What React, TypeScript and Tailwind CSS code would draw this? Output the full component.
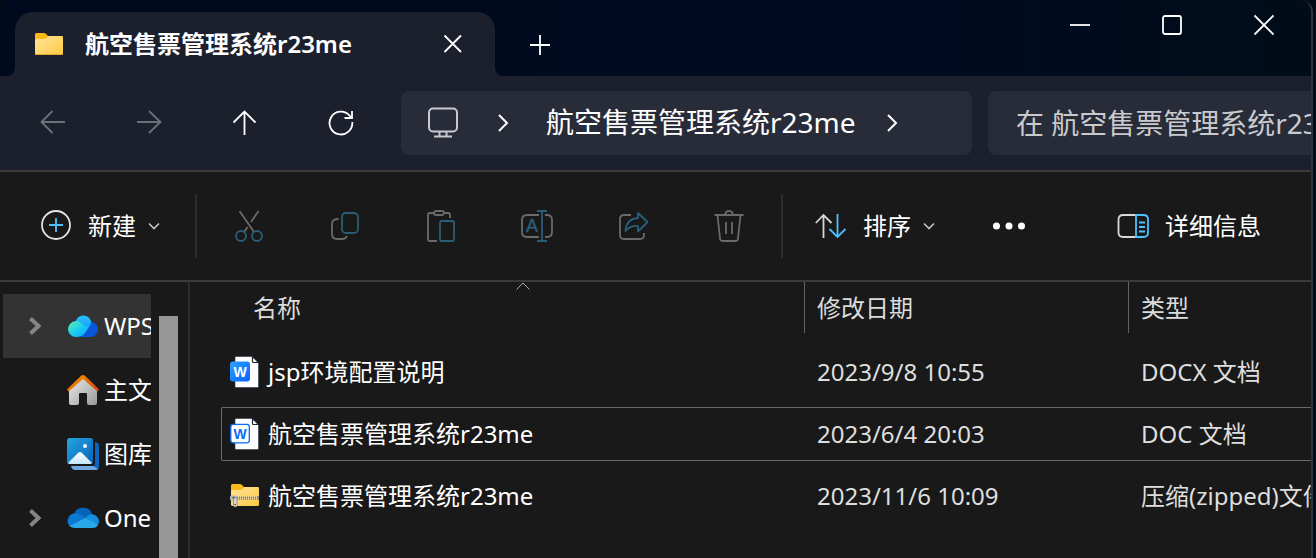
import React from "react";

const files = [
  { icon: "docx", name: "jsp环境配置说明", date: "2023/9/8 10:55", type: "DOCX 文档" },
  { icon: "doc", name: "航空售票管理系统r23me", date: "2023/6/4 20:03", type: "DOC 文档", focused: true },
  { icon: "zip", name: "航空售票管理系统r23me", date: "2023/11/6 10:09", type: "压缩(zipped)文件夹" },
];

const Icon = ({ size = 32, children }: { size?: number; children: React.ReactNode }) => (
  <svg
    width={size}
    height={size}
    viewBox={`0 0 ${size} ${size}`}
    fill="none"
    stroke="currentColor"
    strokeWidth="1.8"
    className="shrink-0"
    aria-hidden="true"
  >
    {children}
  </svg>
);

const FolderIcon = () => (
  <svg width="28" height="22" viewBox="0 0 28 22" className="shrink-0" aria-hidden="true">
    <defs>
      <linearGradient id="folder" x1="0" y1="0" x2="1" y2="1">
        <stop offset="0" stopColor="#ffe49c" />
        <stop offset="1" stopColor="#ffca3e" />
      </linearGradient>
    </defs>
    <path d="M0 1.5Q0 0 1.5 0H9q1 0 2 1l2 2h13.500Q28 3 28 4.500V12H0z" fill="#fbb917" />
    <path d="M0 7.500Q0 6 1.500 6H9.500q1 0 2-1l1-1q.7-1 2-1H26.500Q28 3 28 4.500V20.500Q28 22 26.500 22H1.500Q0 22 0 20.500z" fill="url(#folder)" />
    <path d="M0 20.500Q0 22 1.500 22H26.500Q28 22 28 20.500L27 21H1z" fill="#e9a92b" />
  </svg>
);

const ZipIcon = () => (
  <svg width="30" height="24" viewBox="0 0 30 24" className="shrink-0" aria-hidden="true">
    <path d="M1 1.500Q1 0 2.500 0H10q1 0 2 1l2 2h13.500Q29 3 29 4.500V12H1z" fill="#fbb917" />
    <path d="M1 7.500Q1 6 2.500 6H10.500q1 0 2-1l1-1q.7-1 2-1H27.500Q29 3 29 4.500V20.500Q29 22 27.500 22H2.500Q1 22 1 20.500z" fill="url(#folder)" />
    <path d="M6 12H29V16H6z" fill="#e8cf90" />
    <path d="M7 13.300H29M7 15H29" stroke="#6b5a2e" strokeWidth="1" strokeDasharray="1 1" />
    <path d="M27 12h2v4h-2z" fill="#8f8f8f" />
    <rect x="0" y="11.500" width="7.500" height="5" rx="1.500" fill="#b9b9b9" />
    <path d="M3.500 14h3.500v7.500q0 1.500-1.700 1.500t-1.800-1.500z" fill="#dcdcdc" stroke="#777" strokeWidth=".7" />
    <circle cx="5.200" cy="20.500" r=".8" fill="#444" />
    <circle cx="3.500" cy="13.500" r="1" fill="#555" />
  </svg>
);

const WordIcon = ({ outlined }: { outlined?: boolean }) => (
  <svg width="30" height="32" viewBox="0 0 30 32" className="shrink-0" aria-hidden="true">
    <defs>
      <linearGradient id="wps" x1="0" y1="0" x2="1" y2="1">
        <stop offset="0" stopColor="#2ba2ff" />
        <stop offset="1" stopColor="#0a62ff" />
      </linearGradient>
    </defs>
    <path d="M5 1.500Q5 .5 6 .5H22.500L28.500 6.500V30.500Q28.500 31.500 27.500 31.500H6Q5 31.500 5 30.500z" fill="#fdfeff" stroke="#2d3545" strokeWidth=".6" />
    <path d="M22.500 .5V5.500q0 1 1 1H28.500z" fill="#fff" stroke="#20252f" strokeWidth="1.200" />
    {outlined ? (
      <rect x=".8" y="6.300" width="18.500" height="18.500" rx="2.500" fill="#fff" stroke="#0a6cff" strokeWidth="1.300" />
    ) : (
      <rect x="0" y="5.500" width="20" height="20" rx="3" fill="url(#wps)" />
    )}
    <text
      x="10"
      y="20.500"
      textAnchor="middle"
      fontSize="14"
      fontWeight="700"
      fontFamily="Liberation Sans, sans-serif"
      fill={outlined ? "#0a6cff" : "#fff"}
    >
      W
    </text>
  </svg>
);

const WpsCloudIcon = () => (
  <svg width="32" height="24" viewBox="0 0 32 24" className="shrink-0" aria-hidden="true">
    <defs>
      <linearGradient id="cloudLeft" x1="0" y1="0" x2="1" y2="1">
        <stop offset="0" stopColor="#5cf2a6" />
        <stop offset=".5" stopColor="#1ccfee" />
        <stop offset="1" stopColor="#0a9cff" />
      </linearGradient>
      <linearGradient id="cloudTop" x1="0" y1="0" x2="0" y2="1">
        <stop offset="0" stopColor="#27c3ff" />
        <stop offset="1" stopColor="#168bff" />
      </linearGradient>
    </defs>
    <path d="M13 23L23 7.500A8 8 0 0 1 31 15.500A7.500 7.500 0 0 1 23.500 23z" fill="#0757d6" />
    <path d="M8.500 8.500A8 8 0 0 1 24.300 8Q23.500 13 17 19L9 15z" fill="url(#cloudTop)" />
    <path d="M1 15A8.300 8.300 0 0 1 9 7Q13.500 7 16 10.500Q19 13.500 21.500 12Q18 23 11 23H9A8 8 0 0 1 1 15z" fill="url(#cloudLeft)" />
  </svg>
);

const HomeIcon = () => (
  <svg width="32" height="32" viewBox="0 0 32 32" className="shrink-0" aria-hidden="true">
    <defs>
      <linearGradient id="wall" x1="0" y1="0" x2="1" y2="1">
        <stop offset="0" stopColor="#ededed" />
        <stop offset="1" stopColor="#999" />
      </linearGradient>
      <linearGradient id="roof" x1="0" y1="0" x2="1" y2="1">
        <stop offset="0" stopColor="#f59a00" />
        <stop offset="1" stopColor="#d64208" />
      </linearGradient>
    </defs>
    <path d="M2 15L16 3L30 15V29Q30 31 28 31H22Q20 31 20 29V20Q20 19 19 19H13Q12 19 12 20V29Q12 31 10 31H4Q2 31 2 29z" fill="url(#wall)" />
    <path d="M1.500 17.500L.4 16.300Q-.3 15.500.6 14.700L14.400 1.600Q16 .2 17.600 1.600L31.400 14.700Q32.300 15.500 31.600 16.300L30.500 17.500L16 5z" fill="url(#roof)" />
  </svg>
);

const GalleryIcon = () => (
  <svg width="32" height="32" viewBox="0 0 32 32" className="shrink-0" aria-hidden="true">
    <defs>
      <linearGradient id="photo" x1="0" y1="0" x2="1" y2="1">
        <stop offset="0" stopColor="#22a5e2" />
        <stop offset="1" stopColor="#0a62b5" />
      </linearGradient>
      <linearGradient id="hill" x1="0" y1="0" x2="0" y2="1">
        <stop offset="0" stopColor="#fff" />
        <stop offset="1" stopColor="#c5e5fb" />
      </linearGradient>
    </defs>
    <path d="M28 4Q32 4.500 32 7.500V28Q32 32 28 32L26 28Q28 28 28 25z" fill="#0e63bb" />
    <path d="M4 28H26.500L31 31Q30 32 28 32H8Q5 32 4 28z" fill="#6fa8e0" />
    <rect width="26" height="26" rx="2.500" fill="url(#photo)" />
    <circle cx="18" cy="8" r="2" fill="#fff" />
    <path d="M1 25L11.500 14.600Q13 13.500 14.500 14.600L25 25Q24.500 26 23 26H3Q1.500 26 1 25z" fill="url(#hill)" />
  </svg>
);

const OneDriveIcon = () => (
  <svg width="32" height="22" viewBox="0 0 32 22" className="shrink-0" aria-hidden="true">
    <path d="M7 7A9.500 9.500 0 0 1 25.200 7.500L16 13z" fill="#0563b8" />
    <path d="M7 6.500Q11 5.500 15 8.500L20 12L3 19.500A7.600 7.600 0 0 1 7 6.500z" fill="#0b78d2" />
    <path d="M18 11.500Q21 7 25.500 7.300A7.200 7.200 0 0 1 31.500 17L25 16z" fill="#1490df" />
    <path d="M2.500 19L18 11.300L31.300 17.500Q29.500 21 25.500 21H8Q4.500 21 2.500 19z" fill="#28a8ea" />
  </svg>
);

const ChevronRight = ({ bold }: { bold?: boolean }) => (
  <svg width="16" height="20" viewBox="0 0 16 20" fill="none" stroke="currentColor" strokeWidth={bold ? 4 : 2} className="shrink-0" aria-hidden="true">
    {bold ? <path d="M3.500 2.500L11.500 10L3.500 17.500" /> : <path d="M4 2L12 10L4 18" />}
  </svg>
);

const ChevronDown = () => (
  <svg width="12" height="8" viewBox="0 0 12 8" fill="none" stroke="#c4c4c4" strokeWidth="1.600" className="shrink-0" aria-hidden="true">
    <path d="M1 1.500L6 6.500L11 1.500" />
  </svg>
);

const navButtons = [
  {
    label: "后退",
    disabled: true,
    icon: <path d="M25 12H1.500M12.500 1L1.500 12L12.500 23" />,
  },
  {
    label: "前进",
    disabled: true,
    icon: <path d="M1 12H24.500M13 1L24.500 12L13 23" />,
  },
  {
    label: "上移",
    icon: <path d="M12.500 25V1.500M1.500 12.500L12.500 1.500L23.500 12.500" />,
  },
  {
    label: "刷新",
    icon: <path d="M24.300 12A11.400 11.400 0 1 1 21.500 5.500L23.500 8M24 1V8H16.500" />,
  },
];

const actions = [
  {
    label: "剪切",
    icon: (
      <>
        <path d="M6.500 1L21 22M25.500 1L18 12M14.500 17L11.500 21.500" stroke="#6a6a6a" />
        <circle cx="8" cy="26" r="5" />
        <circle cx="24" cy="26" r="5" />
      </>
    ),
  },
  {
    label: "复制",
    icon: (
      <>
        <path d="M9.500 9Q3 9 3 14V24Q3 29 8 29H13Q17 29 18 26" stroke="#6a6a6a" />
        <rect x="13" y="3" width="16" height="20" rx="4" />
      </>
    ),
  },
  {
    label: "粘贴",
    icon: (
      <>
        <path d="M9 3H5Q3 3 3 5V29Q3 31 5 31H12M19 3H23Q25 3 25 5V8" stroke="#6a6a6a" />
        <rect x="9" y="1" width="10" height="4" rx="2" stroke="#6a6a6a" />
        <rect x="15" y="11" width="14" height="20" rx="2" />
      </>
    ),
  },
  {
    label: "重命名",
    icon: (
      <>
        <path d="M18 5H6Q1 5 1 10V22Q1 27 6 27H18M24 5H26Q31 5 31 10V22Q31 27 26 27H24" stroke="#6a6a6a" />
        <path d="M21 1V31M16 1H26M16 31H26" />
        <text x="11" y="22" textAnchor="middle" fontSize="18" fontFamily="Liberation Sans, sans-serif" fill="currentColor" stroke="currentColor" strokeWidth=".5">
          A
        </text>
      </>
    ),
  },
  {
    label: "共享",
    icon: (
      <>
        <path d="M14 5H7Q3 5 3 9V25Q3 29 7 29H23Q27 29 27 25V23" stroke="#6a6a6a" />
        <path d="M21 3L30.500 12L21 21.500V16Q13 15.500 8.500 21Q9 9 21 8z" strokeLinejoin="round" />
      </>
    ),
  },
  {
    label: "删除",
    icon: (
      <g stroke="#6a6a6a">
        <path d="M1.500 5H30.500M4.500 5L7 28.500Q7.200 31 9.500 31H22.500Q24.800 31 25 28.500L27.500 5M12 5Q12.500 1 16 1T20 5" />
        <path d="M13 12V24M19 12V24" />
      </g>
    ),
  },
];

const places = [
  { label: "WPS云盘", icon: <WpsCloudIcon />, expandable: true, active: true },
  { label: "主文件夹", icon: <HomeIcon /> },
  { label: "图库", icon: <GalleryIcon /> },
  { label: "OneDrive", icon: <OneDriveIcon />, expandable: true },
];

const TitleBar = () => (
  <header className="flex h-19">
    {/* Dark strips beside the tab keep a round foot against the bar below */}
    <div className="w-[15px] bg-[#1b202c]">
      <div className="h-full rounded-br-lg bg-[#000a1e]" />
    </div>
    <div className="flex min-w-0 flex-1 bg-[#1b202c]">
      <div className="bg-[#000a1f] pt-3">
        <div className="flex h-16 w-120 items-center rounded-t-[18px] bg-[#1b202c] pr-8 pl-5">
          <FolderIcon />
          <span className="ml-[22px] flex-1 truncate text-2xl font-semibold">航空售票管理系统r23me</span>
          <button aria-label="关闭标签页">
            <Icon size={20}>
              <path d="M1.500 1.500L18 18M18 1.500L1.500 18" />
            </Icon>
          </button>
        </div>
      </div>
      <div className="flex min-w-0 flex-1 rounded-bl-lg bg-linear-to-r from-[#000a1f] via-[#000a21] to-[#000d18]">
        <button aria-label="新建标签页" className="ml-[34px] self-start pt-[34px]">
          <Icon size={22}>
            <path d="M11 1V21M1 11H21" />
          </Icon>
        </button>
        <div className="mr-px ml-auto flex h-[50px]">
          <button aria-label="最小化" className="flex w-[92px] items-center justify-center">
            <Icon size={22}>
              <path d="M1 11H21" />
            </Icon>
          </button>
          <button aria-label="最大化" className="flex w-[92px] items-center justify-center">
            <Icon size={22}>
              <rect x="2" y="2" width="18" height="18" rx="2" />
            </Icon>
          </button>
          <button aria-label="关闭" className="flex w-[92px] items-center justify-center">
            <Icon size={22}>
              <path d="M1.500 1.500L20.500 20.500M20.500 1.500L1.500 20.500" />
            </Icon>
          </button>
        </div>
      </div>
    </div>
  </header>
);

const NavBar = () => (
  <nav className="flex h-24 items-center border-b-2 border-[#3a3a3a] bg-[#1b202c] pl-[5px] text-[28px]">
    {navButtons.map((b) => (
      <button
        key={b.label}
        aria-label={b.label}
        disabled={b.disabled}
        className="flex w-24 shrink-0 items-center justify-center disabled:text-[#6c7079]"
      >
        <Icon size={26}>{b.icon}</Icon>
      </button>
    ))}
    <div className="ml-3 flex h-16 min-w-0 flex-1 items-center rounded-lg bg-[#272c38] pl-[26px]">
      <button aria-label="此电脑" className="text-[#c8cacd]">
        <Icon>
          <rect x="2" y="1.500" width="28" height="23" rx="4" strokeWidth="2" />
          <path d="M12.500 25V29M19.500 25V29M7 29.500H25" strokeWidth="2" />
        </Icon>
      </button>
      <span className="ml-9">
        <ChevronRight />
      </span>
      <button className="ml-[35px] whitespace-nowrap">航空售票管理系统r23me</button>
      <span className="ml-7">
        <ChevronRight />
      </span>
    </div>
    <input
      type="text"
      aria-label="搜索"
      placeholder="在 航空售票管理系统r23me 中搜索"
      className="ml-4 h-16 w-[323px] shrink-0 rounded-l-lg bg-[#272c38] pl-7 outline-none placeholder:text-[#c9cacd] placeholder:opacity-100"
    />
  </nav>
);

const Toolbar = () => (
  <div className="flex h-[110px] items-center border-b-2 border-[#3a3a3a] pr-[50px] pl-10 whitespace-nowrap">
    <button className="flex w-[155px] items-center">
      <Icon>
        <circle cx="16" cy="15" r="14" stroke="#e4e4e4" />
        <path d="M16 8V22M9 15H23" stroke="#4cc2ff" />
      </Icon>
      <span className="mr-3 ml-4">新建</span>
      <ChevronDown />
    </button>
    <span className="h-16 w-0.5 bg-[#2d2d2d]" />
    <div className="mx-1 flex">
      {actions.map((a) => (
        <button key={a.label} aria-label={a.label} disabled className="flex w-24 justify-center text-[#2a5d78]">
          <Icon>{a.icon}</Icon>
        </button>
      ))}
    </div>
    <span className="h-16 w-0.5 bg-[#2d2d2d]" />
    <button className="ml-8 flex items-center">
      <Icon>
        <path d="M8.500 28V5M.8 13L8.500 5L16.500 13" stroke="#d8d8d8" />
        <path d="M22.500 4V27M14.500 19L22.500 27L30.500 19" stroke="#4cc2ff" />
      </Icon>
      <span className="mr-3 ml-4">排序</span>
      <ChevronDown />
    </button>
    <button aria-label="查看更多" className="ml-[58px]">
      <svg width="32" height="8" viewBox="0 0 32 8" fill="#fff" aria-hidden="true">
        <circle cx="3.500" cy="4" r="3.500" />
        <circle cx="16" cy="4" r="3.500" />
        <circle cx="28.500" cy="4" r="3.500" />
      </svg>
    </button>
    <button className="ml-auto flex items-center">
      <Icon>
        <path d="M19 5H6Q1.500 5 1.500 9.500V22.500Q1.500 27 6 27H19" stroke="#d8d8d8" />
        <path d="M19 5H26.500Q31 5 31 9.500V22.500Q31 27 26.500 27H19zM22 12.500H28M22 17H28M22 21.500H28" stroke="#4cc2ff" />
      </Icon>
      <span className="ml-4">详细信息</span>
    </button>
  </div>
);

const Sidebar = () => (
  <aside className="flex w-[190px] shrink-0 border-r-2 border-[#2b2b2b] pl-[3px]">
    <ul className="mt-3 w-37 overflow-hidden">
      {places.map((p) => (
        <li key={p.label}>
          <a
            href="#"
            className={`flex h-16 items-center whitespace-nowrap ${p.active ? "bg-[#333333]" : ""}`}
          >
            <span className="w-16 shrink-0 pl-6 text-[#858585]">{p.expandable && <ChevronRight bold />}</span>
            {p.icon}
            <span className="ml-[5px]">{p.label}</span>
          </a>
        </li>
      ))}
    </ul>
    <div className="ml-2 flex pt-[34px]">
      <div className="w-[19px] bg-[#979797]" />
    </div>
  </aside>
);

const FileIcon = ({ kind }: { kind: string }) => (kind === "zip" ? <ZipIcon /> : <WordIcon outlined={kind === "doc"} />);

const FileTable = () => (
  <main className="min-w-0 flex-1 overflow-hidden pl-[31px]">
    <table className="w-full table-fixed border-separate border-spacing-0 text-left whitespace-nowrap">
      <colgroup>
        <col />
        <col className="w-[324px]" />
        <col className="w-[183px]" />
      </colgroup>
      <thead className="text-[#dcdcdc]">
        <tr>
          <th className="relative p-0 pb-2 font-normal">
            <svg width="14" height="8" viewBox="0 0 14 8" fill="none" stroke="#aaa" className="absolute top-0 left-1/2 ml-[3px]" aria-hidden="true">
              <path d="M.5 7.500L7 1L13.500 7.500" />
            </svg>
            <div className="flex h-[51px] items-center pl-8">名称</div>
          </th>
          <th className="p-0 pb-2 font-normal">
            <div className="flex h-[51px] items-center border-l border-[#636363] pl-3">修改日期</div>
          </th>
          <th className="p-0 pb-2 font-normal">
            <div className="flex h-[51px] items-center border-l border-[#636363] pl-3">类型</div>
          </th>
        </tr>
      </thead>
      <tbody className="text-[#dedede]">
        {files.map((f) => {
          const edge = f.focused ? "border-[#6a6a6a]" : "border-transparent";
          return (
            <tr key={f.icon}>
              <td className="p-0 py-1">
                <div className={`flex h-[54px] items-center gap-2 rounded-l-xs border-y border-l pl-2 text-white ${edge}`}>
                  <FileIcon kind={f.icon} />
                  <span>{f.name}</span>
                </div>
              </td>
              <td className="p-0 py-1">
                <div className={`flex h-[54px] items-center border-y pl-[13px] ${edge}`}>{f.date}</div>
              </td>
              <td className="overflow-hidden p-0 py-1">
                <div className={`flex h-[54px] items-center border-y pl-[13px] ${edge}`}>{f.type}</div>
              </td>
            </tr>
          );
        })}
      </tbody>
    </table>
  </main>
);

const App = () => {
  return (
    <div className="min-h-screen bg-[#020c17] pr-[3px] font-['Noto_Sans','Noto_Sans_CJK_SC',sans-serif] text-2xl text-white">
      <div
        lang="zh-CN"
        className="flex min-h-screen flex-col overflow-hidden rounded-t-xl border-r-2 border-[#2e343c] bg-[#191919]"
      >
        <TitleBar />
        <NavBar />
        <Toolbar />
        <div className="flex flex-1">
          <Sidebar />
          <FileTable />
        </div>
      </div>
    </div>
  );
};

export default App;
